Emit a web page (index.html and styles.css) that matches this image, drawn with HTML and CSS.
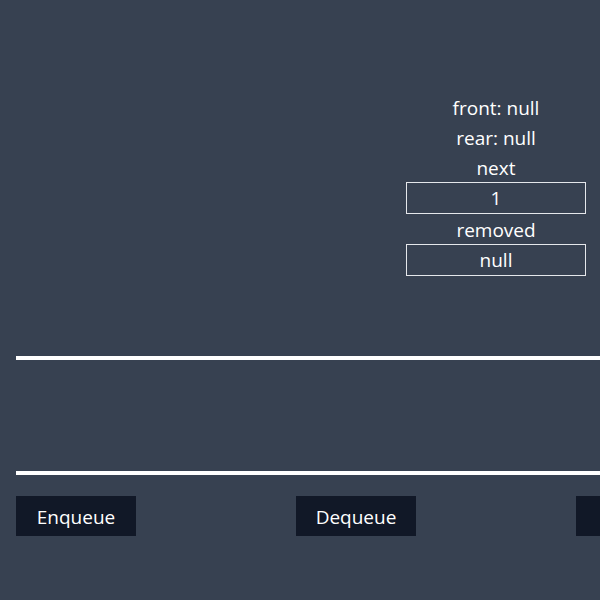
FILE: index.html
```html
<!DOCTYPE html>
<html>
<head>
<meta charset="utf-8">
<link rel="stylesheet" href="styles.css">
</head>
<body>
<div class="page">
  <div class="top">
    <div class="info">
      <div class="label">front: null</div>
      <div class="label">rear: null</div>
      <div class="label">next</div>
      <div class="box">1</div>
      <div class="label">removed</div>
      <div class="box">null</div>
    </div>
  </div>
  <div class="queue"></div>
  <div class="buttons">
    <button class="btn">Enqueue</button>
    <button class="btn">Dequeue</button>
    <button class="btn">Size</button>
  </div>
</div>
</body>
</html>
```
FILE: styles.css
```css
html, body {
  margin: 0;
  padding: 0;
  background: #374151;
  overflow: hidden;
  height: 100%;
}
body {
  font-family: "Open Sans", sans-serif;
  color: #ffffff;
  font-size: 19px;
}
.page {
  padding: 93px 0 0 16px;
  width: 900px;
}
.top {
  width: 570px;
  display: flex;
  justify-content: flex-end;
  height: 263px;
}
.info {
  width: 180px;
  display: flex;
  flex-direction: column;
  align-items: stretch;
  text-align: center;
}
.label {
  height: 30px;
  line-height: 30px;
}
.box {
  border: 1px solid #e5e7eb;
  height: 30px;
  line-height: 30px;
  margin-top: -1px;
  margin-bottom: 1px;
}
.queue {
  width: 800px;
  height: 111px;
  border-top: 4px solid #ffffff;
  border-bottom: 4px solid #ffffff;
}
.buttons {
  display: flex;
  gap: 160px;
  margin-top: 21px;
}
.btn {
  width: 120px;
  height: 40px;
  background: #111827;
  color: #ffffff;
  border: none;
  font-family: inherit;
  font-size: 19px;
  padding: 2px 0 0 0;
  flex: none;
}
```
